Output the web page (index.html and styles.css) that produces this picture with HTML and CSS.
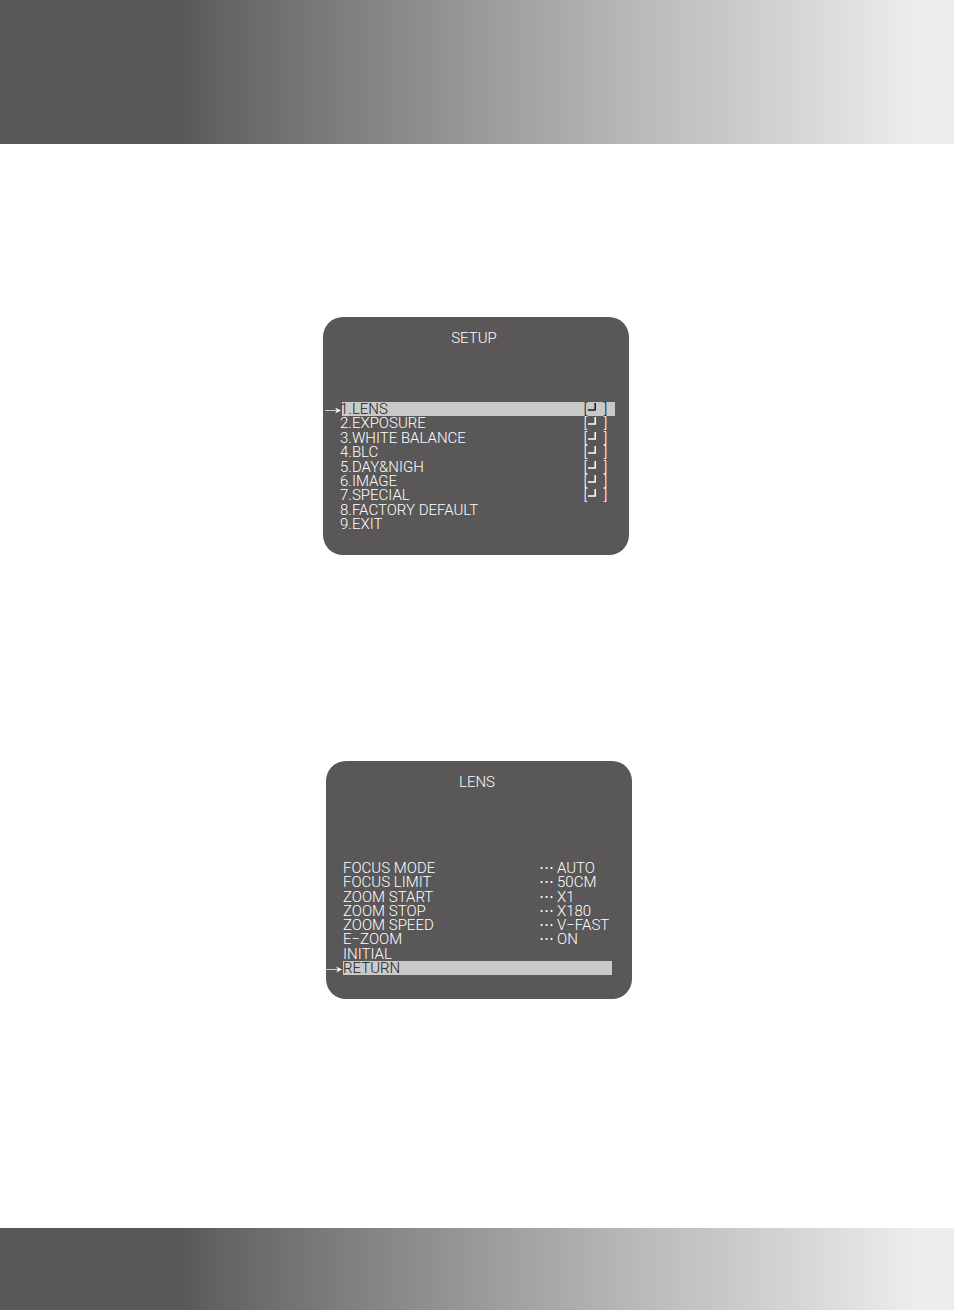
FILE: index.html
```
<!DOCTYPE html>
<html lang="en">
<head>
  <meta charset="UTF-8">
  <title>Camera Setup Menu</title>
  <link rel="stylesheet" href="styles.css">
</head>
<body>

<svg class="symbols" aria-hidden="true">
  <symbol id="enter" viewBox="0 0 8 8">
    <path d="M7.2 0V7H0" fill="none" stroke="currentColor" stroke-width="1.5"/>
  </symbol>
  <symbol id="pointer" viewBox="0 0 16 8">
    <path d="M0 4.5H14" fill="none" stroke="#c9cacb" stroke-width="1"/>
    <path d="M10 1.5L16 4.5L10 7.5L12 4.5Z" fill="#fff"/>
  </symbol>
</svg>

<header class="band header"></header>

<main>
  <section class="screen setup">
    <h2>SETUP</h2>
    <ul class="menu">
      <li class="selected"><svg class="pointer"><use href="#pointer"/></svg><span class="name">1.LENS</span><span class="enter">[<svg><use href="#enter"/></svg>]</span></li>
      <li><span class="name">2.EXPOSURE</span><span class="enter">[<svg><use href="#enter"/></svg>]</span></li>
      <li><span class="name">3.WHITE BALANCE</span><span class="enter">[<svg><use href="#enter"/></svg>]</span></li>
      <li><span class="name">4.BLC</span><span class="enter">[<svg><use href="#enter"/></svg>]</span></li>
      <li><span class="name">5.DAY&amp;NIGH</span><span class="enter">[<svg><use href="#enter"/></svg>]</span></li>
      <li><span class="name">6.IMAGE</span><span class="enter">[<svg><use href="#enter"/></svg>]</span></li>
      <li><span class="name">7.SPECIAL</span><span class="enter">[<svg><use href="#enter"/></svg>]</span></li>
      <li><span class="name">8.FACTORY DEFAULT</span></li>
      <li><span class="name">9.EXIT</span></li>
    </ul>
  </section>

  <section class="screen lens">
    <h2>LENS</h2>
    <ul class="menu">
      <li><span class="name">FOCUS MODE</span><span class="dots">⋯</span><span class="value">AUTO</span></li>
      <li><span class="name">FOCUS LIMIT</span><span class="dots">⋯</span><span class="value">50CM</span></li>
      <li><span class="name">ZOOM START</span><span class="dots">⋯</span><span class="value">X1</span></li>
      <li><span class="name">ZOOM STOP</span><span class="dots">⋯</span><span class="value">X180</span></li>
      <li><span class="name">ZOOM SPEED</span><span class="dots">⋯</span><span class="value">V−FAST</span></li>
      <li><span class="name">E−ZOOM</span><span class="dots">⋯</span><span class="value">ON</span></li>
      <li><span class="name">INITIAL</span></li>
      <li class="selected"><svg class="pointer"><use href="#pointer"/></svg><span class="name">RETURN</span></li>
    </ul>
  </section>
</main>

<footer class="band footer"></footer>

</body>
</html>
```

FILE: styles.css
```
* {
  box-sizing: border-box;
}

body {
  margin: 0;
  min-height: 100vh;
  display: flex;
  flex-direction: column;
  background-color: #fff;
  font-family: Roboto, "Liberation Sans", sans-serif;
  font-weight: 300;
  font-size: 15px;
  line-height: 14px;
}

.symbols {
  display: none;
}

.band {
  background: linear-gradient(to right, #595757 19%, #656262 23%, #6d6e6d 28%, #868686 40%, #9e9f9e 53%, #b7b8b8 66%, #c9caca 77%, #dbdddc 87%, #eceeed 96%);
}

.header {
  height: 144px;
}

.footer {
  height: 82px;
}

main {
  flex: 1;
  display: flex;
  flex-direction: column;
  align-items: center;
  gap: 206px;
  padding: 173px 0;
}

.screen {
  width: 306px;
  max-width: 100%;
  padding: 14px 17px 24px;
  border-radius: 20px;
  background-color: #595757;
  color: #fff;
}

.screen h2 {
  margin: 0 0 57px;
  padding-right: 4px;
  font-size: 15px;
  font-weight: 300;
  text-align: center;
}

.menu {
  list-style: none;
  margin: 0;
  padding: 0;
  display: flex;
  flex-direction: column;
  justify-content: space-between;
}

.menu li {
  display: flex;
  position: relative;
}

.name {
  flex: 1;
}

.selected {
  background-color: #c8caca;
  color: #231815;
}

/* arrow sits on the screen edge, left of the row */
.pointer {
  position: absolute;
  left: -17px;
  top: 4px;
  width: 16px;
  height: 8px;
}

.setup {
  margin-right: 2px;
}

.setup .menu {
  min-height: 129px;
  margin-right: -3px;
}

/* the bar starts slightly inside the first digit */
.setup .selected {
  margin-left: 2px;
}

.setup .selected .name {
  margin-left: -2px;
}

.enter {
  display: flex;
  width: 25px;
  margin-right: 7px;
  font-family: Inter, "Liberation Sans", sans-serif;
}

.enter svg {
  width: 8px;
  height: 8px;
  margin-top: 1px;
  margin-right: auto;
}

.lens {
  margin-left: 4px;
}

.lens .menu {
  min-height: 114px;
  margin-right: 3px;
}

.lens h2 {
  margin-bottom: 72px;
}

.dots {
  width: 18px;
  line-height: 12px;
}

.value {
  width: 55px;
}
```
